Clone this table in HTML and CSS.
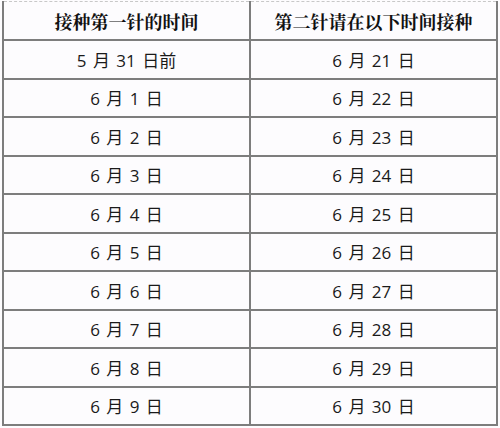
FILE: index.html
```html
<!DOCTYPE html>
<html>
<head>
<meta charset="utf-8">
<link rel="stylesheet" href="styles.css">
</head>
<body>
<div class="wrap">
<table class="sched">
<thead>
<tr><th>接种第一针的时间</th><th>第二针请在以下时间接种</th></tr>
</thead>
<tbody>
<tr><td>5 月 31 日前</td><td>6 月 21 日</td></tr>
<tr><td>6 月 1 日</td><td>6 月 22 日</td></tr>
<tr><td>6 月 2 日</td><td>6 月 23 日</td></tr>
<tr><td>6 月 3 日</td><td>6 月 24 日</td></tr>
<tr><td>6 月 4 日</td><td>6 月 25 日</td></tr>
<tr><td>6 月 5 日</td><td>6 月 26 日</td></tr>
<tr><td>6 月 6 日</td><td>6 月 27 日</td></tr>
<tr><td>6 月 7 日</td><td>6 月 28 日</td></tr>
<tr><td>6 月 8 日</td><td>6 月 29 日</td></tr>
<tr><td>6 月 9 日</td><td>6 月 30 日</td></tr>
</tbody>
</table>
</div>
</body>
</html>
```
FILE: styles.css
```css
html, body {
  margin: 0;
  padding: 0;
  background: #fdfcfe;
}
.wrap {
  padding: 1px 1px 0 2px;
  width: 499px;
  box-sizing: border-box;
}
.sched {
  width: 100%;
  border-collapse: collapse;
  table-layout: fixed;
  border-top: 1px dashed #c8c8c8;
  color: #1a1a1a;
}
.sched th, .sched td {
  border-left: 2px solid #7d7d7d;
  border-right: 2px solid #7d7d7d;
  border-bottom: 2px solid #7d7d7d;
  text-align: center;
  padding: 0;
  vertical-align: middle;
}
.sched th {
  height: 37px;
  font-family: "Noto Serif CJK SC", "Noto Sans CJK SC", serif;
  font-weight: 700;
  font-size: 18px;
  color: #111;
}
.sched td {
  height: 36.5px;
  font-family: "Open Sans", "Noto Sans CJK SC", sans-serif;
  font-size: 17px;
  word-spacing: 2px;
}
```
